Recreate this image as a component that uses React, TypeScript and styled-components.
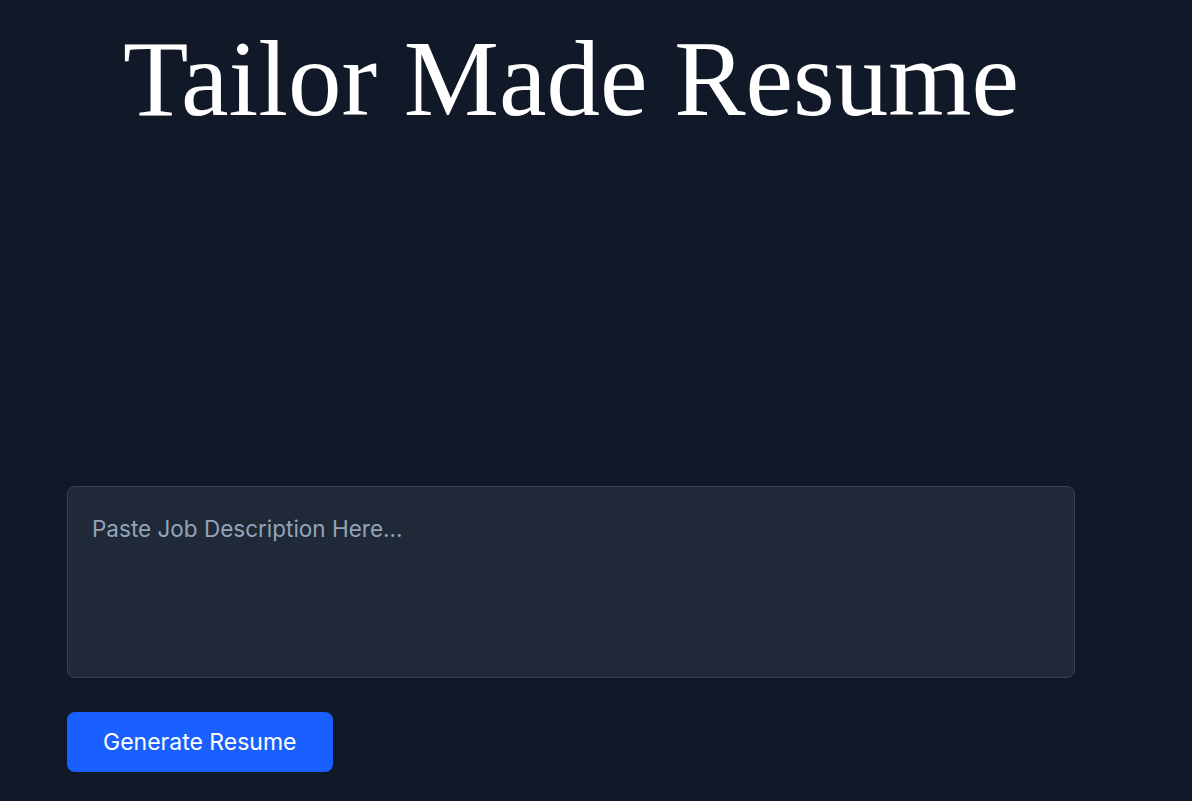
import React from "react";
import styled, { createGlobalStyle } from "styled-components";

const GlobalStyle = createGlobalStyle`
  html, body { margin: 0; padding: 0; background: #111827; }
  body { font-family: Inter, "Noto Sans", sans-serif; }
`;

const Page = styled.main`
  min-height: 801px;
  background: #111827;
  padding: 0 117px 0 67px;
  box-sizing: border-box;
`;

const Container = styled.div`
  width: 1008px;
  display: flex;
  flex-direction: column;
`;

const Title = styled.h1`
  margin: 0;
  padding-top: 15px;
  height: 486px;
  box-sizing: border-box;
  font-family: "Liberation Serif", "DejaVu Serif", serif;
  font-weight: 400;
  font-size: 107px;
  line-height: 1.2;
  color: #ffffff;
  text-align: center;
`;

const TextArea = styled.textarea`
  width: 1008px;
  height: 192px;
  box-sizing: border-box;
  margin: 0;
  padding: 24px;
  background: #1f2937;
  border: 1px solid #374151;
  border-radius: 8px;
  color: #e5e7eb;
  font-family: Inter, "Noto Sans", sans-serif;
  font-size: 22.5px;
  line-height: 1.6;
  resize: none;
  outline: none;
  &::placeholder { color: #94a3b8; }
`;

const Button = styled.button`
  align-self: flex-start;
  margin-top: 34px;
  height: 60px;
  padding: 0 36px;
  border: none;
  border-radius: 8px;
  background: #1a5fff;
  color: #ffffff;
  font-family: Inter, "Noto Sans", sans-serif;
  font-size: 23px;
  cursor: pointer;
`;

export default function App() {
  return (
    <>
      <GlobalStyle />
      <Page>
        <Container>
          <Title>Tailor Made Resume</Title>
          <TextArea placeholder="Paste Job Description Here..." />
          <Button>Generate Resume</Button>
        </Container>
      </Page>
    </>
  );
}
